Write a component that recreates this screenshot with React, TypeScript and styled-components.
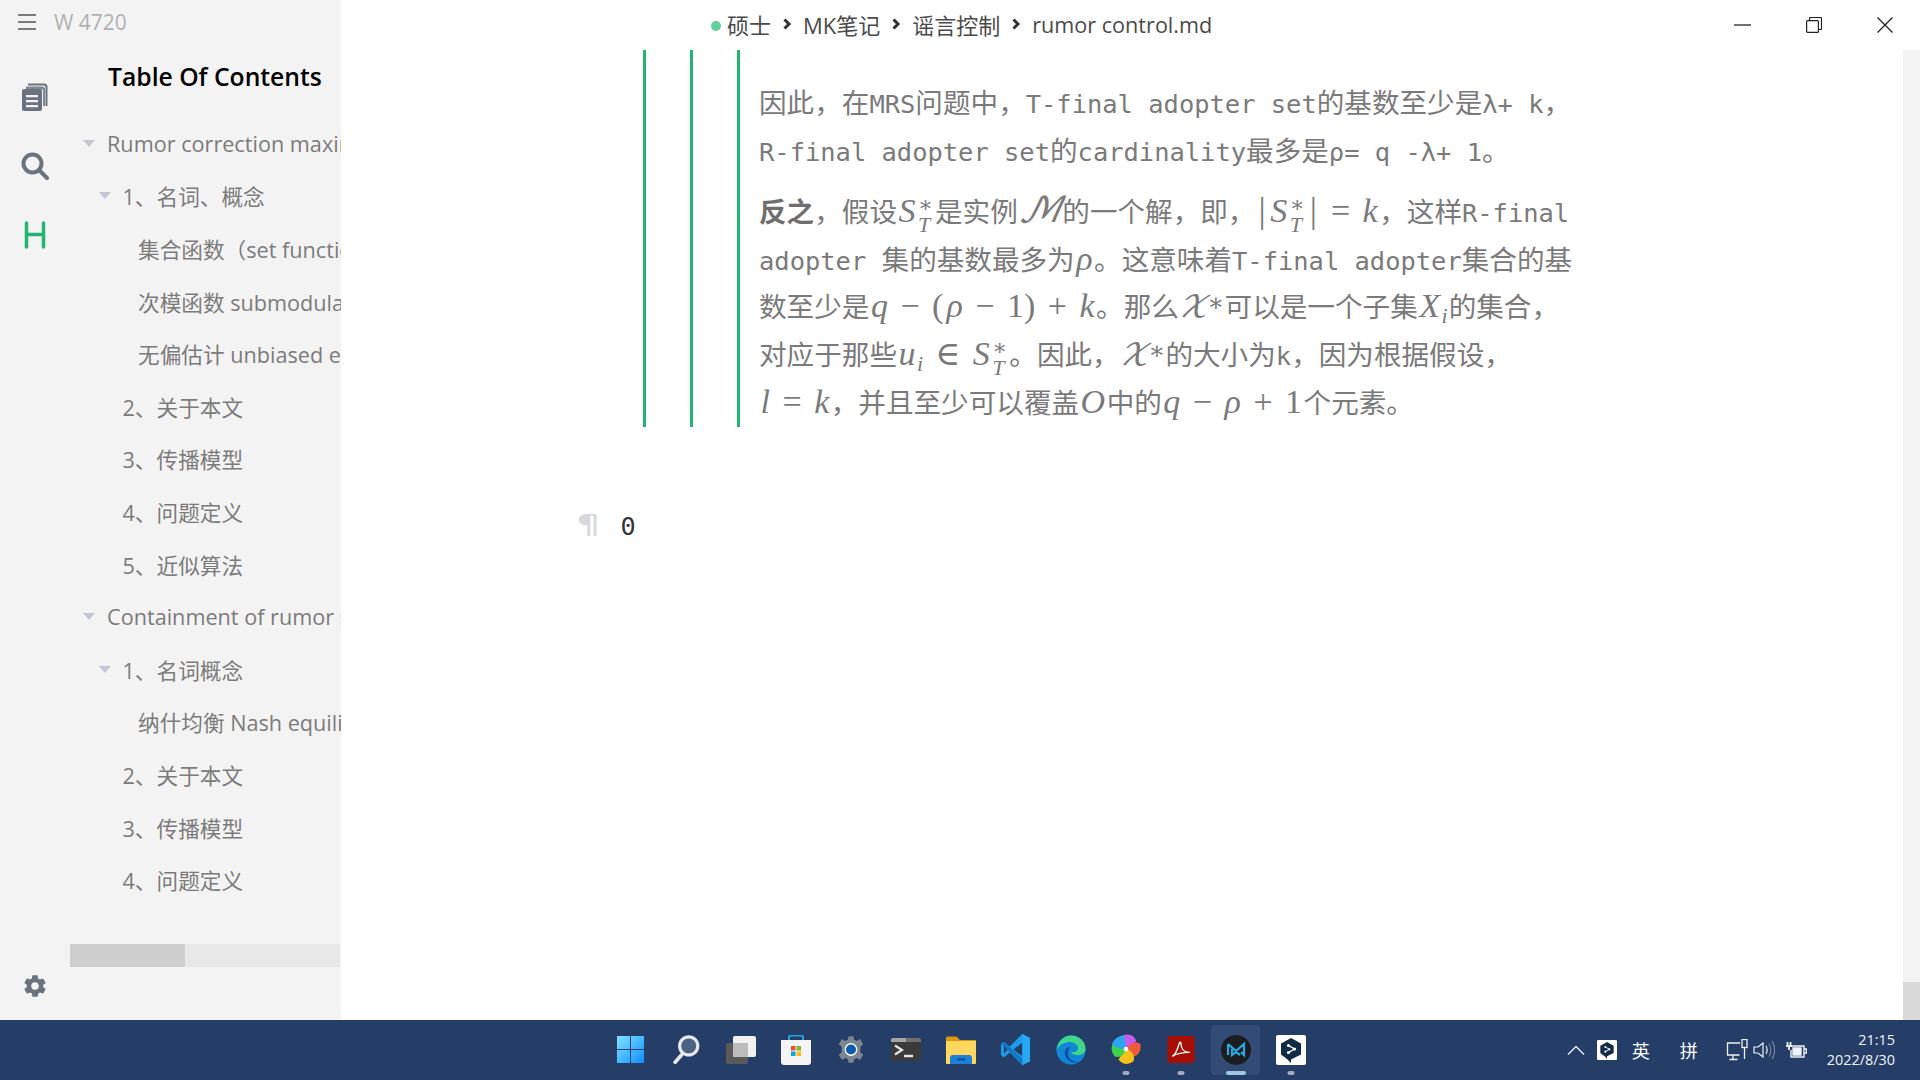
import React from "react";
import styled, { createGlobalStyle } from "styled-components";

const Global = createGlobalStyle`
  html, body { margin: 0; padding: 0; width: 1920px; height: 1080px; overflow: hidden; background: #fff; }
  * { box-sizing: border-box; }
`;
const SANS = `"Open Sans", "Noto Sans CJK SC", sans-serif`;
const MONO = `"DejaVu Sans Mono", "Noto Sans CJK SC", monospace`;
const SERIF = `"Liberation Serif", "DejaVu Serif", serif`;

const Screen = styled.div`width: 1920px; height: 1080px; display: flex; flex-direction: column; overflow: hidden;`;
const Main = styled.div`height: 1020px; display: flex; background: #fff;`;
const Sidebar = styled.aside`width: 341px; flex: none; display: flex; flex-direction: column; background: #f3f3f3; font-family: ${SANS};`;
const SideTop = styled.div`height: 44px; flex: none; display: flex; align-items: center; gap: 18px; padding-left: 18px;`;
const VaultName = styled.span`font-size: 21px; color: #b1b1b1; line-height: 44px;`;
const SideBody = styled.div`flex: 1; min-height: 0; display: flex;`;
const Rail = styled.nav`width: 70px; flex: none; display: flex; flex-direction: column; align-items: center; padding: 39px 0 21px; gap: 41px;`;
const RailBottom = styled.div`margin-top: auto; height: 26px;`;
const TocPanel = styled.div`width: 271px; flex: none; display: flex; flex-direction: column; overflow: hidden;`;
const TocTitle = styled.h2`margin: 0 0 7px; height: 66px; padding-left: 38px; font-size: 24.7px; font-weight: 600; color: #000; line-height: 65px; white-space: nowrap;`;
const TocList = styled.ul`list-style: none; margin: 0; padding: 0; display: flex; flex-direction: column;`;
const TocRow = styled.li<{ $level: number }>`
  height: 52.6px; display: flex; align-items: center; white-space: nowrap;
  padding-left: ${p => 13 + p.$level * 15.5}px; font-size: 21.65px; color: #7b7b7b;
`;
const ArrowBox = styled.span`width: 24px; flex: none; display: flex; align-items: center;`;
const Arrow = styled.span`width: 0; height: 0; border-left: 6px solid transparent; border-right: 6px solid transparent; border-top: 7px solid #c3c7d0;`;
const HScroll = styled.div`margin-top: auto; margin-bottom: 53px; width: 270px; height: 23px; flex: none; background: #e8e8e8;`;
const HThumb = styled.div`width: 115px; height: 100%; background: #cfcfcf;`;

const Editor = styled.section`flex: 1; min-width: 0; display: flex; flex-direction: column; position: relative;`;
const TitleBar = styled.header`height: 50px; flex: none; display: flex; align-items: center; padding-left: 370px;`;
const Crumbs = styled.div`display: flex; align-items: center; font-family: ${SANS}; font-size: 22px; color: #4a4a4a; white-space: nowrap; margin-top: -2px;`;
const CrumbFile = styled.span`font-size: 21.6px;`;
const Dot = styled.span`width: 10px; height: 10px; border-radius: 50%; background: #63cf9d; margin-right: 6px; margin-top: 3px;`;
const Sep = styled.span`width: 32px; display: flex; justify-content: center;`;
const WinButtons = styled.div`margin-left: auto; display: flex; align-items: center;`;
const WinButton = styled.span`width: 71px; height: 50px; display: flex; align-items: center; justify-content: center;`;

const Doc = styled.div`flex: 1; min-height: 0; padding-left: 302px; padding-right: 100px;`;
const Quote = styled.div<{ $last?: boolean }>`
  border-left: 3px solid #21b573; padding-left: ${p => (p.$last ? 19 : 44)}px;
  ${p => p.$last && "padding-top: 28px; padding-bottom: 2px;"}
`;
const Para = styled.div`color: #7a7a7a; font-family: "Noto Sans CJK SC", sans-serif; font-size: 27.6px; & + & { margin-top: 13.5px; }`;
const Line = styled.div`height: 47.7px; line-height: 47.7px; white-space: nowrap;`;
const Mono = styled.span`font-family: ${MONO}; font-size: 25.45px;`;
const Strong = styled.b`font-weight: 700; color: #6e6e6e;`;
const Mi = styled.span`font-family: ${SERIF}; font-style: italic; font-size: 34px; margin: 0 1.5px;`;
const Mn = styled.span`font-family: ${SERIF}; font-size: 34px; margin: 0 1.5px;`;
const Bar = styled.span`font-family: ${SERIF}; font-size: 36px; margin: 0 3px;`;
const Op = styled.span`font-family: ${SERIF}; font-size: 34px; margin: 0 11px;`;
const Scripts = styled.span`display: inline-flex; flex-direction: column; align-items: flex-start; vertical-align: 10px; font-family: ${SERIF}; font-size: 22px; line-height: 20px; height: 20px; margin: 0 2px 0 1px; font-style: italic; width: 15px;`;
const Star = styled.span`font-style: normal;`;
const SubI = styled.sub`font-family: ${SERIF}; font-style: italic; font-size: 22px; line-height: 0; vertical-align: -6px; margin-right: 1px;`;
const SupStar = styled.sup`font-family: ${SERIF}; font-size: 25px; line-height: 0; vertical-align: 6px;`;
const Cal = styled.span<{ $big?: boolean }>`font-family: "DejaVu Math TeX Gyre", "DejaVu Sans", ${SERIF}; font-style: italic; font-size: ${p => (p.$big ? 35 : 30)}px;`;

const NextLine = styled.div`margin-top: 85px; margin-left: -63px; display: flex; align-items: center; gap: 24px;`;
const Pilcrow = styled.span`font-family: "DejaVu Sans", sans-serif; font-size: 26px; color: #d6d8dc; line-height: 30px; display: inline-block; transform: scaleX(1.5) translateY(-2px);`;
const Zero = styled.span`font-family: "DejaVu Sans Mono", monospace; font-size: 25.2px; color: #333; line-height: 30px;`;

const VScroll = styled.div`position: absolute; right: 0; top: 50px; bottom: 0; width: 17px; background: #f3f3f3; display: flex; align-items: flex-end;`;
const VThumb = styled.div`width: 100%; height: 38px; background: #d9d9d9;`;

const Taskbar = styled.footer`height: 60px; flex: none; background: #243e68; display: flex; align-items: center; padding-left: 603px; position: relative;`;
const TaskIcons = styled.div`display: flex; align-items: center;`;
const TaskSlot = styled.div<{ $active?: boolean }>`
  width: 55px; height: 50px; margin-top: -1px; position: relative; display: flex; align-items: center; justify-content: center;
  ${p => p.$active && "background: #334c76; border-radius: 4px; margin: -1px 3px 0; width: 49px;"}
`;
const Pill = styled.span<{ $active?: boolean }>`
  position: absolute; left: 50%; transform: translateX(-50%); bottom: 0; height: 4px; border-radius: 2px;
  width: ${p => (p.$active ? 20 : 7)}px; background: ${p => (p.$active ? "#9cc7de" : "#a1abbc")};
`;
const Tray = styled.div`margin-left: auto; display: flex; align-items: center; color: #fff; font-family: "Noto Sans CJK SC", sans-serif; font-size: 18px; padding-right: 25px;`;
const TrayText = styled.span<{ $w: number }>`width: ${p => p.$w}px; text-align: center; display: flex; justify-content: center;`;
const TrayIcon = styled.span<{ $gap: number }>`margin-left: ${p => p.$gap}px; display: flex;`;
const Clock = styled.div`margin-left: 20px; text-align: right; font-family: ${SANS}; font-size: 14.4px; line-height: 20px; color: #f2f4f7;`;

const FilesIco = ({ c = "#6a737d" }: { c?: string }) => (
  <svg width="26" height="28" viewBox="0 0 26 28">
    <path d="M6 0.5h16a3.5 3.5 0 0 1 3.500 3.500v19h-2V4a1.500 1.500 0 0 0-1.500-1.500H6z" fill={c} />
    <path d="M4 3.500h16a3 3 0 0 1 3 3V23h-2V6.500H4z" fill={c} opacity=".85" />
    <path fillRule="evenodd" d="M2 6h16a2 2 0 0 1 2 2v18a2 2 0 0 1-2 2H2a2 2 0 0 1-2-2V8a2 2 0 0 1 2-2zM4 12v2.200h12V12zM4 17v2.200h12V17zM4 22v2.200h12V22z" fill={c} />
  </svg>
);
const SearchIco = () => (
  <svg width="28" height="28" viewBox="0 0 28 28" fill="none" stroke="#6a737d">
    <circle cx="11.500" cy="11.500" r="9" strokeWidth="4" />
    <path d="M18 18l8 8" strokeWidth="4" strokeLinecap="round" />
  </svg>
);
const HIco = () => (
  <svg width="22" height="28" viewBox="0 0 22 28" fill="none" stroke="#22b573" strokeWidth="3.500" strokeLinecap="round">
    <path d="M2.500 2v24M19.500 2v24M2.500 13.500h17" />
  </svg>
);
const GearIco = () => (
  <svg width="26" height="26" viewBox="0 0 24 24" fill="#6a737d">
    <path fillRule="evenodd" d="M19.430 12.980c.04-.32.07-.64.07-.98s-.03-.66-.07-.98l2.110-1.650a.5.5 0 0 0 .12-.64l-2-3.460a.5.5 0 0 0-.61-.22l-2.490 1a7.300 7.300 0 0 0-1.690-.98l-.38-2.650A.49.49 0 0 0 14 2h-4a.49.49 0 0 0-.49.420l-.38 2.650c-.61.25-1.170.59-1.690.98l-2.490-1a.49.49 0 0 0-.61.220l-2 3.460a.49.49 0 0 0 .12.640l2.110 1.650c-.04.320-.07.650-.07.980s.03.660.07.980l-2.110 1.650a.5.5 0 0 0-.12.640l2 3.460c.12.220.39.300.61.220l2.490-1c.52.400 1.080.730 1.690.980l.38 2.650c.03.240.24.420.49.420h4c.25 0 .46-.18.490-.42l.38-2.650c.61-.25 1.170-.59 1.690-.98l2.490 1c.23.090.49 0 .61-.22l2-3.460a.5.5 0 0 0-.12-.64zM12 15.500a3.500 3.500 0 1 1 0-7 3.500 3.500 0 0 1 0 7z" />
  </svg>
);
const Burger = () => (
  <svg width="18" height="16" viewBox="0 0 18 16" stroke="#555" strokeWidth="1.700"><path d="M0 1h18M0 8h18M0 15h18" /></svg>
);
const Chevron = () => (
  <svg width="10" height="12" viewBox="0 0 10 12" fill="none" stroke="#333" strokeWidth="3"><path d="M2.500 1.500L7 6l-4.500 4.500" /></svg>
);

const Win = () => (
  <svg width="29" height="29" viewBox="0 0 30 30">
    <defs><linearGradient id="w" x1="0" y1="0" x2="1" y2="1"><stop offset="0" stopColor="#7fe3ff" /><stop offset="1" stopColor="#0f8fff" /></linearGradient></defs>
    <path fill="url(#w)" d="M1 1h13.500v13.500H1zM15.500 1H29v13.500H15.500zM1 15.500h13.500V29H1zM15.500 15.500H29V29H15.500z" />
  </svg>
);
const SearchTask = () => (
  <svg width="28" height="29" viewBox="0 0 30 32" fill="none">
    <circle cx="18" cy="12" r="10" fill="#4b6285" stroke="#e6e9ee" strokeWidth="3.500" />
    <path d="M10 22l-7 8" stroke="#e6e9ee" strokeWidth="4" strokeLinecap="round" />
  </svg>
);
const TaskView = () => (
  <svg width="30" height="28" viewBox="0 0 30 28">
    <rect x="7" width="23" height="21" rx="2" fill="#f1f1f1" />
    <rect y="7" width="22" height="21" rx="2" fill="#5a5a5a" />
    <rect x="7" y="7" width="15" height="14" fill="#bdbdbd" />
  </svg>
);
const Store = () => (
  <svg width="30" height="30" viewBox="0 0 30 30">
    <path d="M8 6V2a1.500 1.500 0 0 1 1.500-1.500h11A1.500 1.500 0 0 1 22 2v4" fill="none" stroke="#20a7e0" strokeWidth="2" />
    <path d="M0 5h30v22a3 3 0 0 1-3 3H3a3 3 0 0 1-3-3z" fill="#f4f4f4" />
    <path fill="#e8502e" d="M10 11h4.500v4.500H10z" /><path fill="#7cb928" d="M15.500 11H20v4.500h-4.500z" /><path fill="#0ea1e8" d="M10 16.500h4.500V21H10z" /><path fill="#fbb713" d="M15.500 16.500H20V21h-4.500z" />
  </svg>
);
const SettingsTask = () => (
  <svg width="30" height="29" viewBox="0 0 24 24">
    <path fillRule="evenodd" fill="#7c8592" d="M10 1h4l.6 3 2.200 1 2.700-1.600 2.600 4.300-2.400 2v4.600l2.400 2-2.600 4.300-2.700-1.600-2.200 1-.6 3h-4l-.6-3-2.200-1-2.700 1.600-2.600-4.300 2.400-2V9.700l-2.400-2 2.600-4.300 2.700 1.600 2.200-1z" />
    <circle cx="12" cy="12" r="5.300" fill="#fff" /><circle cx="12" cy="12" r="4.200" fill="#0b5cad" />
  </svg>
);
const Term = () => (
  <svg width="30" height="23" viewBox="0 0 30 23">
    <rect width="30" height="23" rx="2" fill="#3a3a3a" />
    <path d="M0 2a2 2 0 0 1 2-2h13v4H0z" fill="#a5a5a5" /><path d="M15 0h13a2 2 0 0 1 2 2v2H15z" fill="#6f6f6f" />
    <path d="M4 7.500l7 4.500-7 4.500" fill="none" stroke="#e5e5e5" strokeWidth="2.200" /><path d="M13 18h9" stroke="#e5e5e5" strokeWidth="2.500" />
  </svg>
);
const Folder = () => (
  <svg width="30" height="28" viewBox="0 0 30 28">
    <path d="M0 2a1.500 1.500 0 0 1 1.500-1.500h9L14 4h16v4H0z" fill="#d99a0b" />
    <path d="M0 5h30v22a1 1 0 0 1-1 1H1a1 1 0 0 1-1-1z" fill="#fdd75f" />
    <path d="M4 22a3 3 0 0 1 3-3h16a3 3 0 0 1 3 3v6H4z" fill="#1c7fd8" /><path d="M11 23.500h8" stroke="#0d4a96" strokeWidth="2" />
  </svg>
);
const VSCode = () => (
  <svg width="31" height="31" viewBox="0 0 32 32">
    <path d="M23 0l8 4v24l-8 4-13-13-6 5-3-2v-12l3-2 6 5z" fill="#1b9cec" />
    <path d="M23 9l-9 7 9 7z" fill="#243e68" /><path d="M4 12v8l4-4z" fill="#243e68" />
    <path d="M23 0v32l8-4V4z" fill="#29a8f2" />
    <path d="M1 10l3-2 19 17v6z" fill="#0f6fb9" opacity=".8" />
  </svg>
);
const Edge = () => (
  <svg width="30" height="30" viewBox="0 0 32 32">
    <circle cx="16" cy="16" r="15.500" fill="#1086d6" />
    <path d="M16 .5c9 0 15.500 6.500 15.500 14 0 5-4 7-8 7-3 0-7-1-7-3.500 4 1 7-1 7-4 0-4-5-6.500-9-6.500-6 0-12.500 4-14 9C1.500 7 8 .5 16 .5z" fill="#3fd58a" />
    <path d="M13 13c-4 2-5 8-1 12.500 3 3.500 8 5 12 3-6 0-10-2.500-11-7-.6-3 0-6 2-8z" fill="#0b4f9e" />
  </svg>
);
const Swirl = () => (
  <svg width="30" height="31" viewBox="0 0 32 33">
    <path d="M16 16C11 12 9 6 14 1c7-2 12 2 13 7z" fill="#c65cf0" />
    <path d="M16 16c3-5 8-9 15-6 2 6-1 12-6 14z" fill="#f25a3c" />
    <path d="M16 16c6 2 10 6 8 13-7 5-13 3-16-2z" fill="#f7c318" />
    <path d="M16 16c-2 6-6 10-12 8C0 19 0 14 2 10z" fill="#3fd14a" />
    <path d="M16 16C10 16 5 15 1 11 3 5 8 2 14 1z" fill="#2aa5f0" />
    <circle cx="16" cy="16" r="2.500" fill="#fff" />
  </svg>
);
const Acrobat = () => (
  <svg width="28" height="27" viewBox="0 0 28 28">
    <rect width="28" height="28" rx="3" fill="#a90e05" />
    <path d="M5 21c3-1 5-6 7-13 .5-2 2-2 2 0 0 5 3 9 9 9-6 0-13 1-18 4z" fill="none" stroke="#fff" strokeWidth="1.400" />
  </svg>
);
const MarkApp = () => (
  <svg width="30" height="30" viewBox="0 0 30 30">
    <circle cx="15" cy="15" r="15" fill="#1b1d21" />
    <path d="M7 9l8 7 8-7v11l-3-3M7 20V9M11 14v6l4-3 4 3" fill="none" stroke="#2aa8e0" strokeWidth="2.200" />
  </svg>
);
const DeepDoc = ({ s = 30 }: { s?: number }) => (
  <svg width={s} height={s} viewBox="0 0 30 30">
    <rect width="30" height="30" rx="2" fill="#fff" />
    <path d="M15 3l10 5.500v11L15 24.500V28l-3.500-3.500L5 19.500v-11z" fill="#0f2b46" />
    <path d="M12.500 10.500l6 3.500-6 3.500" fill="none" stroke="#fff" strokeWidth="1.400" /><circle cx="12.500" cy="10.500" r="1.600" fill="#fff" /><circle cx="12.500" cy="17.500" r="1.600" fill="#fff" /><circle cx="18.500" cy="14" r="1.600" fill="#fff" />
  </svg>
);
const tasks: { el: React.ReactNode; pill?: boolean; active?: boolean }[] = [
  { el: <Win /> }, { el: <SearchTask /> }, { el: <TaskView /> }, { el: <Store /> }, { el: <SettingsTask /> },
  { el: <Term /> }, { el: <Folder /> }, { el: <VSCode /> }, { el: <Edge /> }, { el: <Swirl />, pill: true },
  { el: <Acrobat />, pill: true }, { el: <MarkApp />, pill: true, active: true }, { el: <DeepDoc />, pill: true },
];

const toc: { t: string; l: number; open?: boolean }[] = [
  { t: "Rumor correction maximization", l: 0, open: true },
  { t: "1、名词、概念", l: 1, open: true },
  { t: "集合函数（set function）", l: 2 },
  { t: "次模函数 submodular function", l: 2 },
  { t: "无偏估计 unbiased estimator", l: 2 },
  { t: "2、关于本文", l: 1 },
  { t: "3、传播模型", l: 1 },
  { t: "4、问题定义", l: 1 },
  { t: "5、近似算法", l: 1 },
  { t: "Containment of rumor spread", l: 0, open: true },
  { t: "1、名词概念", l: 1, open: true },
  { t: "纳什均衡 Nash equilibrium", l: 2 },
  { t: "2、关于本文", l: 1 },
  { t: "3、传播模型", l: 1 },
  { t: "4、问题定义", l: 1 },
];

const SStar = () => (
  <>
    <Mi>S</Mi>
    <Scripts><Star>∗</Star><span>T</span></Scripts>
  </>
);

export default function App() {
  return (
    <Screen>
      <Global />
      <Main>
        <Sidebar>
          <SideTop><Burger /><VaultName>W 4720</VaultName></SideTop>
          <SideBody>
            <Rail>
              <FilesIco />
              <SearchIco />
              <HIco />
              <RailBottom><GearIco /></RailBottom>
            </Rail>
            <TocPanel>
              <TocTitle>Table Of Contents</TocTitle>
              <TocList>
                {toc.map((r, i) => (
                  <TocRow key={i} $level={r.l}>
                    <ArrowBox>{r.open && <Arrow />}</ArrowBox>
                    {r.t}
                  </TocRow>
                ))}
              </TocList>
              <HScroll><HThumb /></HScroll>
            </TocPanel>
          </SideBody>
        </Sidebar>
        <Editor>
          <TitleBar>
            <Crumbs>
              <Dot />硕士<Sep><Chevron /></Sep>MK笔记<Sep><Chevron /></Sep>谣言控制<Sep><Chevron /></Sep><CrumbFile>rumor control.md</CrumbFile>
            </Crumbs>
            <WinButtons>
              <WinButton><svg width="17" height="2"><path d="M0 1h17" stroke="#222" strokeWidth="1.300" /></svg></WinButton>
              <WinButton><svg width="16" height="16" fill="none" stroke="#222" strokeWidth="1.200"><rect x=".6" y="3.600" width="11.800" height="11.800" rx="1" /><path d="M3.500 3.500V1.500a1 1 0 0 1 1-1h10a1 1 0 0 1 1 1v10a1 1 0 0 1-1 1h-2" /></svg></WinButton>
              <WinButton><svg width="16" height="16" stroke="#222" strokeWidth="1.300"><path d="M.5.500l15 15M15.500.500l-15 15" /></svg></WinButton>
            </WinButtons>
          </TitleBar>
          <Doc>
            <Quote><Quote><Quote $last>
              <Para>
                <Line>因此，在<Mono>MRS</Mono>问题中，<Mono>T-final adopter set</Mono>的基数至少是<Mono>λ+ k</Mono>，</Line>
                <Line><Mono>R-final adopter set</Mono>的<Mono>cardinality</Mono>最多是<Mono>ρ= q -λ+ 1</Mono>。</Line>
              </Para>
              <Para>
                <Line><Strong>反之</Strong>，假设<SStar />是实例<Cal $big>ℳ</Cal>的一个解，即，<Bar>|</Bar><SStar /><Bar>|</Bar><Op>=</Op><Mi>k</Mi>，这样<Mono>R-final</Mono></Line>
                <Line><Mono>adopter </Mono>集的基数最多为<Mi>ρ</Mi>。这意味着<Mono>T-final adopter</Mono>集合的基</Line>
                <Line>数至少是<Mi>q</Mi><Op>−</Op><Mn>(</Mn><Mi>ρ</Mi><Op>−</Op><Mn>1)</Mn><Op>+</Op><Mi>k</Mi>。那么<Cal>𝒳</Cal><SupStar>∗</SupStar>可以是一个子集<Mi>X</Mi><SubI>i</SubI>的集合，</Line>
                <Line>对应于那些<Mi>u</Mi><SubI>i</SubI><Op>∈</Op><SStar />。因此，<Cal>𝒳</Cal><SupStar>∗</SupStar>的大小为<Mono>k</Mono>，因为根据假设，</Line>
                <Line><Mi>l</Mi><Op>=</Op><Mi>k</Mi>，并且至少可以覆盖<Mi>O</Mi>中的<Mi>q</Mi><Op>−</Op><Mi>ρ</Mi><Op>+</Op><Mn>1</Mn>个元素。</Line>
              </Para>
            </Quote></Quote></Quote>
            <NextLine><Pilcrow>¶</Pilcrow><Zero>0</Zero></NextLine>
          </Doc>
          <VScroll><VThumb /></VScroll>
        </Editor>
      </Main>
      <Taskbar>
        <TaskIcons>
          {tasks.map((t, i) => (
            <TaskSlot key={i} $active={t.active}>
              {t.el}
              {t.pill && <Pill $active={t.active} />}
            </TaskSlot>
          ))}
        </TaskIcons>
        <Tray>
          <svg width="18" height="10" viewBox="0 0 18 10" fill="none" stroke="#eef1f5" strokeWidth="1.300"><path d="M1 9.500l8-8 8 8" /></svg>
          <TrayIcon $gap={12}><DeepDoc s={20} /></TrayIcon>
          <TrayText $w={48}>英</TrayText>
          <TrayText $w={48}>拼</TrayText>
          <TrayIcon $gap={13}><svg width="22" height="22" viewBox="0 0 22 22" fill="none" stroke="#eef1f5" strokeWidth="1.300"><path d="M14 4H1.500v12h12M7 16v4M3.500 20.500h8" /><rect x="16" y=".5" width="5" height="8" /><path d="M18.500 8.500V20" /></svg></TrayIcon>
          <TrayIcon $gap={5}><svg width="22" height="20" viewBox="0 0 22 20" fill="none" stroke="#eef1f5" strokeWidth="1.200"><path d="M1 7h4l5-4v14l-5-4H1z" /><path d="M13 6c1.500 2 1.500 6 0 8" /><path d="M16 3.500c2.500 3.500 2.500 9.500 0 13M19 1c3.500 5 3.500 13 0 18" opacity=".4" /></svg></TrayIcon>
          <TrayIcon $gap={10}><svg width="22" height="18" viewBox="0 0 22 18" fill="none" stroke="#eef1f5" strokeWidth="1.400"><path d="M1 5h6M2.500 1v4M5.500 1v4M4 5v4" strokeWidth="1.800" /><path d="M7 5h12v11H6V9" /><path d="M8 7h8v7H8z" fill="#eef1f5" /><path d="M19 8h2.500v4H19" /></svg></TrayIcon>
          <Clock>21:15<br />2022/8/30</Clock>
        </Tray>
      </Taskbar>
    </Screen>
  );
}
